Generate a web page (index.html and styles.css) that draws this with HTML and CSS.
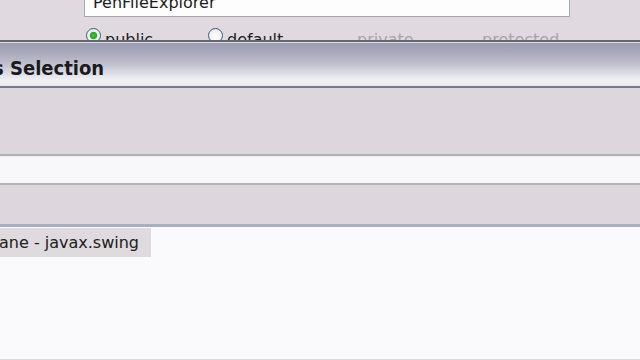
FILE: index.html
```html
<!DOCTYPE html>
<html>
<head>
<meta charset="utf-8">
<link rel="stylesheet" href="styles.css">
</head>
<body>
<div class="backdrop">
  <div class="field">PenFileExplorer</div>
  <div class="radios">
    <div class="radio r1"><span class="dot checked"></span><span>public</span></div>
    <div class="radio r2"><span class="dot"></span><span>default</span></div>
    <div class="radio r3 disabled"><span>private</span></div>
    <div class="radio r4 disabled"><span>protected</span></div>
  </div>
</div>
<div class="dialog">
  <div class="titlebar"><span class="title">s Selection</span></div>
  <div class="pane top"></div>
  <div class="input"></div>
  <div class="pane mid"></div>
  <div class="list">
    <div class="item selected">ane - javax.swing</div>
  </div>
</div>
</body>
</html>
```

FILE: styles.css
```css
html, body {
  margin: 0;
  padding: 0;
  width: 640px;
  height: 360px;
  overflow: hidden;
  background: #ddd6dd;
  font-family: "DejaVu Sans", Verdana, sans-serif;
}

.backdrop {
  height: 40px;
  overflow: hidden;
  background: #e0d9e0;
}

.field {
  box-sizing: border-box;
  margin: -14px 0 0 84px;
  width: 486px;
  height: 31px;
  border: 1px solid #a8a4ac;
  background: #fdfdfd;
  padding: 6px 0 0 8px;
  font-size: 16px;
  line-height: 20px;
  color: #1c1c1c;
}

.radios {
  display: flex;
  margin-top: 11px;
  padding-left: 86px;
}

.radio {
  display: flex;
  align-items: flex-start;
  gap: 4px;
  font-size: 16px;
  line-height: 20px;
  color: #1e1e1e;
}

.radio span:last-child {
  margin-top: 2px;
}

.r1 { width: 122px; }
.r2 { width: 149px; }
.r3 { width: 125px; }

.radio.disabled { color: #aaa3ab; }

.dot {
  box-sizing: border-box;
  width: 15px;
  height: 15px;
  border-radius: 50%;
  border: 1px solid #3c5a78;
  background: radial-gradient(circle at 50% 60%, #ffffff 0, #f2f2f2 55%, #d8d8dc 100%);
  flex: none;
}

.dot.checked {
  background: radial-gradient(circle at 50% 50%, #4cc24c 0, #2fa22f 35%, #e8f2e8 45%, #f4f4f4 100%);
}

.dialog {
  display: flex;
  flex-direction: column;
}

.titlebar {
  box-sizing: border-box;
  height: 48px;
  border-top: 2px solid #65656e;
  border-bottom: 2px solid #7a7a84;
  box-shadow: inset 0 1px 0 #dcdce4;
  background: linear-gradient(to bottom, #9a9ab0 0%, #a6a6ba 20%, #c0c0ce 50%, #e2e2ea 75%, #f2f2f4 88%, #e8e8ee 100%);
  display: flex;
  align-items: center;
  overflow: hidden;
}

.title {
  margin-left: -7px;
  margin-top: 7px;
  font-family: "DejaVu Sans Condensed", "DejaVu Sans", sans-serif;
  font-stretch: condensed;
  font-weight: bold;
  font-size: 20px;
  color: #1a1a1e;
  white-space: nowrap;
}

.pane.top {
  height: 66px;
  border-bottom: 2px solid #b2aeb6;
}

.input {
  height: 26px;
  background: #f8f8fa;
  border-top: 1px solid #ececf0;
  border-bottom: 2px solid #b6b2ba;
}

.pane.mid {
  height: 39px;
  border-bottom: 3px solid #a9adc0;
}

.list {
  height: 131px;
  background: #fafafc;
  padding-top: 1px;
}

.item {
  width: 151px;
  height: 29px;
  line-height: 29px;
  font-size: 16px;
  color: #202020;
  text-indent: -1px;
  white-space: nowrap;
  overflow: hidden;
}

.item.selected {
  background: #dedade;
}
```
